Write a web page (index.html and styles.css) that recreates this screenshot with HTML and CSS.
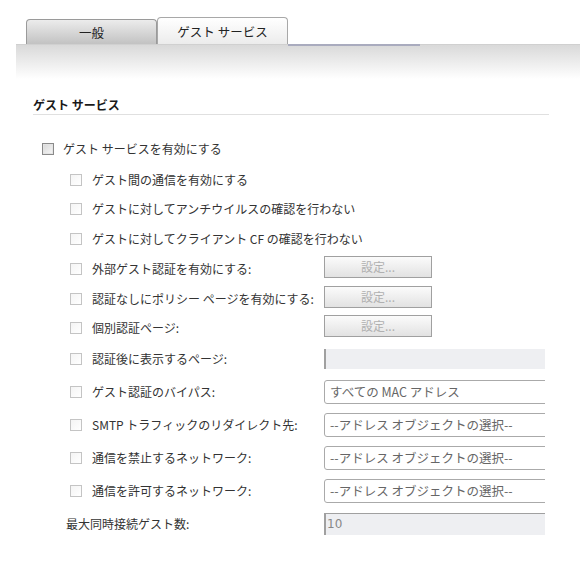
FILE: index.html
```html
<!DOCTYPE html>
<html lang="ja">
<head>
<meta charset="utf-8">
<link rel="stylesheet" href="styles.css">
</head>
<body>
<div class="tabs">
  <div class="tab tab-inactive">一般</div>
  <div class="tab tab-active">ゲスト サービス</div>
  <div class="tab-line"></div>
</div>
<div class="band"></div>
<div class="section">
  <div class="heading">ゲスト サービス</div>
  <div class="row row-main">
    <span class="cb cb-main"></span>
    <span class="label">ゲスト サービスを有効にする</span>
  </div>
  <div class="row sub h29">
    <span class="cb"></span><span class="label">ゲスト間の通信を有効にする</span>
  </div>
  <div class="row sub h30">
    <span class="cb"></span><span class="label">ゲストに対してアンチウイルスの確認を行わない</span>
  </div>
  <div class="row sub h30">
    <span class="cb"></span><span class="label">ゲストに対してクライアント CF の確認を行わない</span>
  </div>
  <div class="row sub h30">
    <span class="cb"></span><span class="label lw">外部ゲスト認証を有効にする:</span>
    <span class="btn">設定...</span>
  </div>
  <div class="row sub h30">
    <span class="cb"></span><span class="label lw">認証なしにポリシー ページを有効にする:</span>
    <span class="btn">設定...</span>
  </div>
  <div class="row sub h28">
    <span class="cb"></span><span class="label lw">個別認証ページ:</span>
    <span class="btn">設定...</span>
  </div>
  <div class="row sub h33">
    <span class="cb"></span><span class="label lw">認証後に表示するページ:</span>
    <span class="ctl"><span class="inp inp-dis"></span></span>
  </div>
  <div class="row sub h33">
    <span class="cb"></span><span class="label lw">ゲスト認証のバイパス:</span>
    <span class="ctl"><span class="inp sel">すべての MAC アドレス</span></span>
  </div>
  <div class="row sub h33">
    <span class="cb"></span><span class="label lw">SMTP トラフィックのリダイレクト先:</span>
    <span class="ctl"><span class="inp sel">--アドレス オブジェクトの選択--</span></span>
  </div>
  <div class="row sub h33">
    <span class="cb"></span><span class="label lw">通信を禁止するネットワーク:</span>
    <span class="ctl"><span class="inp sel">--アドレス オブジェクトの選択--</span></span>
  </div>
  <div class="row sub h33">
    <span class="cb"></span><span class="label lw">通信を許可するネットワーク:</span>
    <span class="ctl"><span class="inp sel">--アドレス オブジェクトの選択--</span></span>
  </div>
  <div class="row plain h33">
    <span class="label lw-plain">最大同時接続ゲスト数:</span>
    <span class="ctl"><span class="inp inp-dis num">10</span></span>
  </div>
</div>
</body>
</html>
```

FILE: styles.css
```css
html, body {
  margin: 0;
  padding: 0;
  background: #fff;
}
body {
  font-family: "Noto Sans CJK JP", "DejaVu Sans", sans-serif;
  font-size: 12px;
  line-height: 16px;
  color: #333;
  width: 580px;
  overflow: hidden;
}
.tabs {
  display: flex;
  align-items: flex-end;
  padding-left: 26px;
  height: 44px;
  box-sizing: border-box;
}
.tab {
  box-sizing: border-box;
  width: 131px;
  text-align: center;
  border: 1px solid #9a9a9a;
  border-bottom: none;
  border-radius: 4px 4px 0 0;
  color: #222;
  font-size: 12.5px;
}
.tab-inactive {
  height: 25px;
  line-height: 25px;
  background: linear-gradient(#ececec, #c2c2c2);
}
.tab-active {
  height: 27px;
  line-height: 27px;
  background: linear-gradient(#ffffff, #ececec);
  border-color: #a8a8a8;
}
.tab-line {
  width: 132px;
  height: 2px;
  background: #a9abbe;
  margin-bottom: -2px;
  position: relative;
}
.band {
  margin-left: 16px;
  height: 34px;
  border-top: 1px solid #d0d0d0;
  background: linear-gradient(#d9d9d9, #ffffff);
}
.section {
  padding-left: 33px;
  width: 516px;
}
.heading {
  font-weight: bold;
  color: #1a1a1a;
  margin-top: 18px;
  padding-bottom: 1px;
  border-bottom: 1px solid #e0e0e0;
  line-height: 16px;
  font-size: 12px;
}
.row {
  display: flex;
  align-items: center;
  white-space: nowrap;
}
.row-main {
  height: 32px;
  margin-top: 18px;
  padding-left: 9px;
}
.row-main .label {
  margin-left: 9px;
}
.sub {
  padding-left: 37px;
}
.sub .label {
  margin-left: 10px;
}
.h28 { height: 28px; }
.h29 { height: 29px; }
.h30 { height: 30px; }
.h33 { height: 33px; }
.lw {
  width: 232px;
  flex: none;
}
.plain {
  padding-left: 33px;
}
.lw-plain {
  width: 258px;
  flex: none;
}
.cb {
  flex: none;
  box-sizing: border-box;
  width: 12px;
  height: 12px;
  border: 1px solid #c4c4c4;
  background: linear-gradient(135deg, #f4f4f4, #ffffff);
}
.cb-main {
  border: 1px solid #8a8a8a;
  box-shadow: inset 0 0 0 1px #e4e4e4;
  background: linear-gradient(135deg, #d8d8d8, #f6f6f6);
}
.label {
  color: #333;
}
.btn {
  flex: none;
  box-sizing: border-box;
  width: 108px;
  height: 22px;
  line-height: 20px;
  text-align: center;
  border: 1px solid #a0a0a0;
  background: linear-gradient(#fbfbfb, #e2e2e2);
  color: #b0b0b0;
  margin-top: -4px;
}
.ctl {
  flex: none;
  width: 221px;
  overflow: hidden;
  display: block;
}
.inp {
  display: block;
  box-sizing: border-box;
  width: 240px;
  height: 24px;
  line-height: 22px;
}
.sel {
  border: 1px solid #aaa;
  border-radius: 3px;
  background: #fff;
  color: #666;
  padding-left: 5px;
  font-size: 12.5px;
}
.inp-dis {
  background: #eeeff2;
  border-top: 2px solid #a0a0a0;
  border-left: 2px solid #a0a0a0;
  height: 23px;
  margin-top: -3px;
}
.num {
  color: #888;
  padding-left: 1px;
  line-height: 21px;
  font-family: "DejaVu Sans", sans-serif;
  font-size: 12px;
  margin-top: -1px;
}
```
